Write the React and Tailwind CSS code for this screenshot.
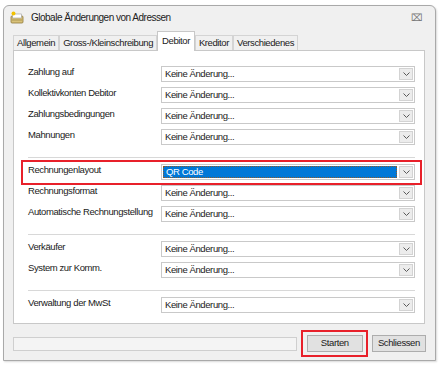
import React from "react";

const tabs = ["Allgemein", "Gross-/Kleinschreibung", "Debitor", "Kreditor", "Verschiedenes"];

const groups = [
  ["Zahlung auf", "Kollektivkonten Debitor", "Zahlungsbedingungen", "Mahnungen"],
  ["Rechnungenlayout", "Rechnungsformat", "Automatische Rechnungstellung"],
  ["Verkäufer", "System zur Komm."],
  ["Verwaltung der MwSt"],
];

const Chevron = () => (
  <svg width="7" height="4" viewBox="0 0 7 4" fill="none">
    <path d="M0.5 0.5 L3.5 3.5 L6.5 0.5" stroke="#5a5a5a" strokeWidth="1" />
  </svg>
);

const Select = ({ selected }) => (
  <div className="flex h-[16px] w-[254px] border border-[#c9c9c9] bg-white">
    {selected ? (
      <div className="m-[1px] flex flex-1 items-center border border-dotted border-[#8a5a2a] bg-[#0078d7] pl-[2px] text-white">
        QR Code
      </div>
    ) : (
      <div className="flex flex-1 items-center pl-[3px] text-[#1a1a1a]">Keine Änderung...</div>
    )}
    <div className="m-[1px] flex w-[14px] items-center justify-center border border-[#d3d3d3] bg-[#ececec]">
      <Chevron />
    </div>
  </div>
);

const Row = ({ label }) => {
  const highlight = label === "Rechnungenlayout";
  return (
    <div className="relative flex items-start">
      <div className="w-[133px] whitespace-nowrap leading-[12px] text-[#1a1a1a]">{label}</div>
      <Select selected={highlight} />
      {highlight && (
        <div className="absolute left-[-7px] top-[-4px] h-[25px] w-[401px] border-[2.5px] border-[#e8202a]" />
      )}
    </div>
  );
};

export default function App() {
  return (
    <div
      className="h-[366px] w-[442px] bg-white pl-[3px] pt-[5px] text-[9.5px] tracking-[-0.4px]"
      style={{ fontFamily: '"Liberation Sans", Arial, sans-serif' }}
    >
      <div className="flex h-[356px] w-[433px] flex-col rounded-t-[6px] border border-[#a9a9a9] bg-[#f0f0f0] shadow-[1px_1px_2px_rgba(0,0,0,0.15)]">
        {/* Title bar */}
        <div className="flex h-[21px] items-center pl-[6px] pr-[12px] pt-[2px]">
          <svg width="14" height="13" viewBox="0 0 14 13">
            <rect x="1" y="5" width="12" height="7" rx="1" fill="#d9c27a" stroke="#8f7a3a" strokeWidth="0.8" />
            <rect x="2.5" y="3" width="9" height="4" fill="#fff" stroke="#999" strokeWidth="0.6" />
            <circle cx="3.5" cy="2.5" r="2" fill="#f2c200" />
            <path d="M2 9 h10" stroke="#8f7a3a" strokeWidth="0.6" />
          </svg>
          <span className="ml-[7px] text-[10px] tracking-[-0.5px] text-[#222]">Globale Änderungen von Adressen</span>
          <span className="ml-auto text-[10px] leading-none tracking-normal text-[#777]">⌧</span>
        </div>

        <div className="flex flex-1 flex-col px-[9px] pt-[4px]">
          {/* Tabs */}
          <div className="flex h-[19px] items-end">
            {tabs.map((t) => {
              const active = t === "Debitor";
              return (
                <div
                  key={t}
                  className={
                    active
                      ? "relative z-10 -mb-px flex h-[20px] items-center border border-b-0 border-[#c8c8c8] bg-white px-[4px] text-[#1a1a1a]"
                      : "flex h-[15px] items-center border border-b-0 border-[#d4d4d4] bg-[#f0f0f0] px-[3px] text-[#1a1a1a]"
                  }
                >
                  {t}
                </div>
              );
            })}
          </div>

          {/* Panel */}
          <div className="flex h-[274px] w-[412px] flex-col border border-[#c8c8c8] bg-white pl-[14px] pt-[15px]">
            {groups.map((g, gi) => (
              <div key={gi} className="flex flex-col">
                {gi > 0 && <div className="mb-[6px] mt-[12px] h-px w-[387px] bg-[#d8d8d8]" />}
                <div className="flex flex-col gap-[5px]">
                  {g.map((l) => (
                    <Row key={l} label={l} />
                  ))}
                </div>
              </div>
            ))}
          </div>

          {/* Bottom bar */}
          <div className="mt-[11px] flex items-center">
            <div className="h-[14px] w-[288px] border border-[#cfcfcf] bg-[#f4f4f4]" />
            <div className="relative ml-[10px]">
              <button className="h-[17px] w-[56px] border border-[#adadad] bg-[#e1e1e1] text-[9.5px] tracking-[-0.4px] text-[#1a1a1a]">
                Starten
              </button>
              <div className="absolute left-[-6px] top-[-5px] h-[27px] w-[67px] border-[2.5px] border-[#e8202a]" />
            </div>
            <button className="ml-[9px] h-[17px] w-[55px] border border-[#adadad] bg-[#e1e1e1] text-[9.5px] tracking-[-0.4px] text-[#1a1a1a]">
              Schliessen
            </button>
          </div>
        </div>
      </div>
    </div>
  );
}
